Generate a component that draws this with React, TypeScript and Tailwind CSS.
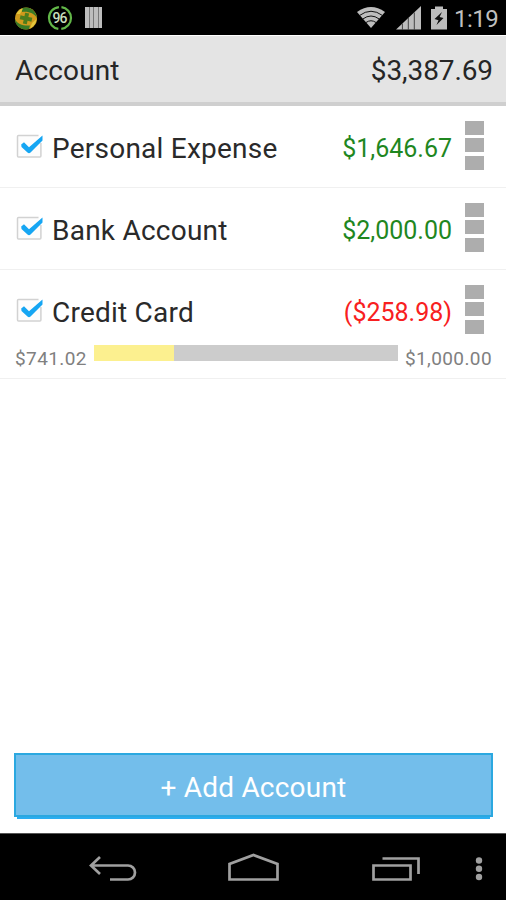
import React from 'react';

type Account = {
  name: string;
  amount: string;
  negative?: boolean;
  credit?: { available: string; limit: string; used: number };
};

const accounts: Account[] = [
  { name: 'Personal Expense', amount: '$1,646.67' },
  { name: 'Bank Account', amount: '$2,000.00' },
  {
    name: 'Credit Card',
    amount: '($258.98)',
    negative: true,
    credit: { available: '$741.02', limit: '$1,000.00', used: 26.2 },
  },
];

function StatusBar() {
  return (
    <div className="flex h-[35px] shrink-0 items-center bg-black pl-[14px] pr-2">
      <svg className="h-[24px] w-[24px]" viewBox="0 0 24 24">
        <circle cx="12" cy="12.5" r="11" fill="#cf9a1c" />
        <path d="M8 2.2C15-.5 22 4 23 12 20 7 14 5 8 6Z" fill="#397a26" />
        <path d="M1 13C3 18 9 20 16 19.500L15 23C8 25 1 20 1 13Z" fill="#397a26" />
        <path d="M2.500 8C4 4.500 6 3 9 2.500L6 8Z" fill="#e3c63c" />
        <path d="M22.500 13C22 18 19 21 16 22.500L18 17Z" fill="#e3c63c" />
        <path d="M10 7H14V10.500H18V14.500H14V18H10V14.500H6V10.500H10Z" fill="#4d7d1c" transform="rotate(12 12 12.5)" />
      </svg>
      <svg className="ml-[9px] h-[26px] w-[26px]" viewBox="0 0 26 26">
        <circle cx="13" cy="13" r="11" fill="none" stroke="#62b748" strokeWidth="2.2" strokeDasharray="31.5 3.05" strokeDashoffset="-1.5" transform="rotate(-90 13 13)" />
        <text x="13" y="18" textAnchor="middle" fontFamily="Roboto, sans-serif" fontSize="14" fontWeight="500" textLength="15" fill="#c9dfbd">96</text>
      </svg>
      <div className="ml-[12px] flex h-[21px] gap-px bg-[#777]">
        <i className="w-[3.5px] bg-[#bdbdbd]" />
        <i className="w-[3.5px] bg-[#bdbdbd]" />
        <i className="w-[3.5px] bg-[#bdbdbd]" />
        <i className="w-[3.5px] bg-[#bdbdbd]" />
      </div>
      <div className="flex-1" />
      <svg className="h-[22px] w-[28px]" viewBox="0 0 28 22">
        <path d="M0 5Q14-5 28 5L14 21Z" fill="#bdbdbd" />
        <path d="M2.500 8.500Q14 0 25.500 8.500M5.800 12Q14 6 22.200 12M9 15.500Q14 12 19 15.500" fill="none" stroke="#111" strokeWidth="1" />
      </svg>
      <svg className="ml-[11px] h-[24px] w-[25px]" viewBox="0 0 25 24">
        <path d="M0 23.500 25 0V23.500Z" fill="#bdbdbd" />
        <path d="M6.400 17.500V24M12.300 12V24M18.300 6.500V24" stroke="#444" strokeWidth="1" />
      </svg>
      <svg className="ml-[10px] h-[24px] w-[16px]" viewBox="0 0 16 24">
        <path d="M0 3H4V0.500H12V3H16V23.500H0Z" fill="#bdbdbd" />
        <path d="M11 6 3.500 13l4 1.200L5.500 19l7-7-3.900-1Z" fill="#111" />
      </svg>
      <span className="ml-[7px] w-[44px] whitespace-nowrap pt-[3px] text-[24px] leading-[32px] tracking-[-0.5px] text-[#bfbfbf]">1:19</span>
    </div>
  );
}

function Checkbox() {
  return (
    <svg className="h-[26px] w-[28px] shrink-0" viewBox="0 0 28 26">
      <rect x="2.500" y="1.500" width="23.400" height="21.600" rx="1" fill="#fdfdfd" stroke="#d2d2d2" strokeWidth="1.500" />
      <path d="M23.500 0H28V9H23.500Z" fill="#fff" />
      <path d="M6.200 10.500 9 8.300 14 13.300 27.500 1.500V6.500L15.500 18.500Q14 20 12.500 18.500L6.500 13Z" fill="#16a6f3" />
    </svg>
  );
}

function MenuBlocks() {
  return (
    <div className="-mt-[3px] flex w-[19px] shrink-0 flex-col gap-[3.500px]">
      <i className="h-[14px] bg-[#adadad]" />
      <i className="h-[14px] bg-[#adadad]" />
      <i className="h-[14px] bg-[#adadad]" />
    </div>
  );
}

function AccountRow({ account }: { account: Account }) {
  return (
    <div className="border-b border-[#f0f0f0]">
      <div className="flex h-[81px] items-center pl-[15px] pr-[22px]">
        <Checkbox />
        <span className="ml-[9px] flex-1 whitespace-nowrap pt-[4px] text-[28px] leading-[34px] tracking-[0.230px] text-[#2a2a2a]">{account.name}</span>
        <span className={`mr-[13px] whitespace-nowrap pt-[4px] text-[25px] leading-[34px] ${account.negative ? 'text-[#f82020]' : 'text-[#1f871f]'}`}>{account.amount}</span>
        <MenuBlocks />
      </div>
      {account.credit && (
        <div className="-mt-[6px] flex h-[33px] px-[14px]">
          <span className="w-[80px] whitespace-nowrap pl-px pt-[3px] text-[19px] leading-[22px] tracking-[0.400px] text-[#808080]">{account.credit.available}</span>
          <div className="h-[16px] flex-1 bg-[#cccccc]">
            <div className="h-full bg-[#fcf08f]" style={{ width: `${account.credit.used}%` }} />
          </div>
          <span className="w-[94px] whitespace-nowrap pt-[3px] text-right text-[19px] leading-[22px] tracking-[0.400px] text-[#808080]">{account.credit.limit}</span>
        </div>
      )}
    </div>
  );
}

function NavBar() {
  return (
    <div className="flex h-[67px] shrink-0 border-t border-[#555] bg-black">
      <svg className="h-[66px] w-[506px]" viewBox="0 834 506 66" fill="none" stroke="#a0a0a0" strokeWidth="2.700">
        <path d="M100 857 91 865.500 100 874M92 865.500H128A7 7 0 0 1 128 879.500H110" />
        <path d="M229.500 879.500V864L253.500 855 277.500 864V879.500Z" />
        <path d="M373.500 865.500H410.500V879.500H373.500ZM382.500 858.500H418.500V874" />
        <g fill="#a0a0a0" stroke="none">
          <circle cx="479" cy="860.500" r="3.200" />
          <circle cx="479" cy="868.800" r="3.200" />
          <circle cx="479" cy="877" r="3.200" />
        </g>
      </svg>
    </div>
  );
}

export default function App() {
  return (
    <div className="flex h-[900px] w-[506px] flex-col overflow-hidden bg-white font-['Roboto','Noto_Sans',sans-serif]">
      <StatusBar />
      <header className="flex h-[71px] shrink-0 items-center justify-between border-b-[4px] border-t border-b-[#cfcfcf] border-t-white bg-[#e4e4e4] pl-[15px] pr-[13px] pt-[3px] text-[28px] leading-[34px] text-[#262626]">
        <span className="tracking-[0.150px]">Account</span>
        <span className="tracking-[-0.100px]">$3,387.69</span>
      </header>
      <main className="flex-1">
        {accounts.map((a) => (
          <AccountRow key={a.name} account={a} />
        ))}
      </main>
      <div className="h-[80px] shrink-0 pl-[14px] pr-[13px]">
        <button className="block h-[64px] w-full border-2 border-[#2ba8e0] bg-[#73beeb] pt-[6px] text-[28px] leading-[34px] tracking-[0.200px] text-white">+ Add Account</button>
        <div className="mx-[3px] h-[2px] bg-[#2badf0]" />
      </div>
      <NavBar />
    </div>
  );
}
